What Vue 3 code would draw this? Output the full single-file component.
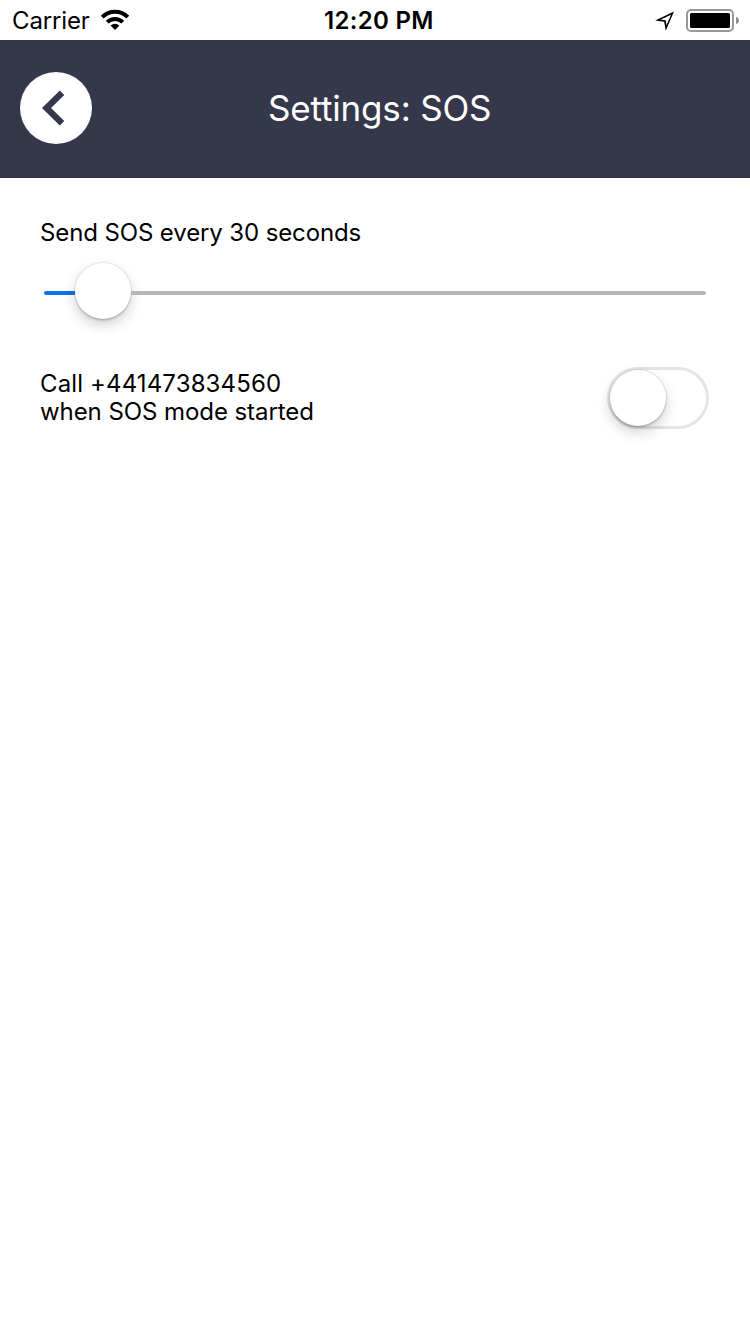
<script setup>
import { ref } from 'vue'

const seconds = ref(30)
const phone = ref('+441473834560')
const callEnabled = ref(false)
</script>

<template>
  <div class="screen">
    <div class="status">
      <div class="side">
        <span class="carrier">Carrier</span>
        <svg class="wifi" width="30" height="22" viewBox="0 0 30 22">
          <g fill="none" stroke="#000" stroke-width="4">
            <path d="M2.2 8.1A18.2 18.2 0 0 1 27.8 8.1" />
            <path d="M7.2 13.1A11.1 11.1 0 0 1 22.8 13.1" />
          </g>
          <path d="M15 21L10.6 16.6A6.2 6.2 0 0 1 19.4 16.6Z" />
        </svg>
      </div>
      <span class="clock">12:20 PM</span>
      <div class="side right">
        <svg class="location" width="20" height="20" viewBox="0 0 20 20">
          <path
            fill-rule="evenodd"
            d="M19 0.4L0.2 9.6L9.2 10.8L10.7 19.7ZM16 3.7L11.5 14.2L10.7 9.3L5.6 8.7Z"
          />
        </svg>
        <svg width="54" height="24" viewBox="0 0 54 24">
          <rect x="1" y="1" width="46" height="21" rx="4" fill="#fff" stroke="#999" stroke-width="2" />
          <rect x="4" y="4" width="40" height="15" rx="1.5" />
          <path d="M50 8Q53 9 53 11.5Q53 14 50 15Z" fill="#8c8c8c" />
        </svg>
      </div>
    </div>
    <header class="header">
      <button class="back" aria-label="Back">
        <svg width="72" height="72" viewBox="0 0 72 72">
          <path d="M42 20.7L26.5 36L42 51.3" fill="none" stroke="#35374a" stroke-width="6.4" />
        </svg>
      </button>
      <h1>Settings: SOS</h1>
    </header>
    <main>
      <p class="interval">Send SOS every {{ seconds }} seconds</p>
      <div class="slider">
        <div class="fill"></div>
        <div class="knob"></div>
        <div class="rest"></div>
      </div>
      <div class="row">
        <p><span class="call">Call {{ phone }}</span><br /><span class="mode">when SOS mode started</span></p>
        <div class="toggle" role="switch" :aria-checked="callEnabled">
          <div class="knob"></div>
        </div>
      </div>
    </main>
  </div>
</template>

<style>
body {
  background: #fff;
}
</style>

<style scoped>
.screen {
  height: 1334px;
  overflow: hidden;
  background: #fff;
  color: #000;
  font-family: Inter, "Liberation Sans", sans-serif;
}
.status {
  height: 40px;
  display: flex;
  align-items: center;
  font-size: 24px;
  line-height: 40px;
  white-space: nowrap;
}
.side {
  flex: 1;
  display: flex;
  align-items: center;
  padding-left: 12px;
}
.carrier {
  width: 77px;
  padding-top: 1px;
  letter-spacing: -0.15px;
}
.wifi {
  margin-left: 11px;
}
.clock {
  width: 104px;
  padding-top: 1px;
  font-weight: 600;
  font-size: 24px;
  letter-spacing: 0.3px;
}
.right {
  justify-content: flex-end;
  padding: 1px 10px 0 0;
}
.location {
  margin-right: 11px;
}
.header {
  height: 138px;
  box-sizing: border-box;
  display: flex;
  align-items: center;
  padding: 0 20px 2px;
  background: #35374a;
  color: #fff;
}
.back {
  width: 72px;
  height: 72px;
  padding: 0;
  border: 0;
  border-radius: 50%;
  background: #fff;
  display: flex;
}
h1 {
  margin: 0 0 0 176px;
  font-weight: 400;
  font-size: 35px;
  line-height: 44px;
  letter-spacing: -0.17px;
  white-space: nowrap;
}
main {
  padding: 41px 40px 0;
}
p {
  margin: 0;
  font-size: 24px;
  line-height: 28px;
  white-space: nowrap;
}
.interval {
  letter-spacing: -0.12px;
}
.call {
  letter-spacing: 0.13px;
}
.mode {
  letter-spacing: -0.07px;
}
.slider {
  display: flex;
  align-items: center;
  height: 60px;
  margin: 14px 4px 0;
}
.fill,
.rest {
  height: 4px;
  margin-top: 4px;
  background: #b5b5b5;
  border-radius: 0 2px 2px 0;
}
.fill {
  width: 31px;
  background: #0b74e6;
  border-radius: 2px 0 0 2px;
}
.rest {
  flex: 1;
}
.knob {
  width: 56px;
  height: 56px;
  border-radius: 50%;
  background: #fff;
  box-shadow: 0 0 1px 1px rgba(0, 0, 0, 0.08), 0 2px 2px rgba(0, 0, 0, 0.14), 0 6px 14px rgba(0, 0, 0, 0.18);
}
.row {
  display: flex;
  justify-content: space-between;
  align-items: center;
  margin-top: 46px;
}
.toggle {
  width: 102px;
  height: 62px;
  box-sizing: border-box;
  margin-right: 1px;
  border: 3px solid #e5e5e5;
  border-radius: 31px;
}
</style>
